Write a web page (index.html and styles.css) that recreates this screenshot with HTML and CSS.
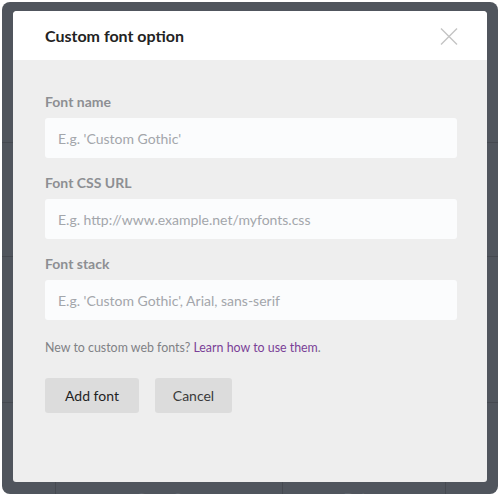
FILE: index.html
```html
<!DOCTYPE html>
<html>
<head>
<meta charset="utf-8">
<link rel="stylesheet" href="styles.css">
</head>
<body>
<div class="frame">
  <div class="backdrop">
    <div class="bd-row r1"></div>
    <div class="bd-row r2"></div>
    <div class="bd-row r3"></div>
    <div class="bd-row r4">
      <div class="bd-cell c1"></div>
      <div class="bd-cell c2">Open Sans</div>
      <div class="bd-cell c3">Delete</div>
      <div class="bd-cell c4"></div>
    </div>
  </div>
  <div class="modal">
    <div class="modal-header">
      <h1 class="title">Custom font option</h1>
      <svg class="close" width="18" height="17" viewBox="0 0 18 17">
        <path d="M1 0.5 L17 16.5 M17 0.5 L1 16.5" stroke="#c4c4c4" stroke-width="1.4" fill="none"/>
      </svg>
    </div>
    <div class="modal-body">
      <div class="field">
        <label class="label">Font name</label>
        <input class="input" type="text" placeholder="E.g. 'Custom Gothic'">
      </div>
      <div class="field">
        <label class="label">Font CSS URL</label>
        <input class="input" type="text" placeholder="E.g. http://www.example.net/myfonts.css">
      </div>
      <div class="field">
        <label class="label">Font stack</label>
        <input class="input" type="text" placeholder="E.g. 'Custom Gothic', Arial, sans-serif">
      </div>
      <p class="help">New to custom web fonts? <a class="link" href="#">Learn how to use them</a>.</p>
      <div class="actions">
        <button class="btn btn-primary">Add font</button>
        <button class="btn btn-cancel">Cancel</button>
      </div>
    </div>
  </div>
</div>
</body>
</html>
```

FILE: styles.css
```css
html, body {
  margin: 0;
  padding: 0;
  background: #ffffff;
}
body {
  font-family: Lato, "Open Sans", "Liberation Sans", sans-serif;
}
.frame {
  position: relative;
  box-sizing: border-box;
  width: 496px;
  height: 492px;
  margin: 2px 0 0 2px;
  background: #50555d;
  border-radius: 8px;
  padding: 9px 11px 12px 11px;
  overflow: hidden;
}
.backdrop {
  position: absolute;
  inset: 0;
  display: flex;
  flex-direction: column;
  overflow: hidden;
}
.bd-row {
  flex-shrink: 0;
  border-bottom: 1px solid #454950;
}
.r1 { height: 140px; }
.r2 { height: 113px; }
.r3 { height: 145px; }
.r4 {
  flex: 1 0 auto;
  border-bottom: none;
  display: flex;
  padding-top: 78px;
}
.bd-cell {
  border-left: 1px solid #454950;
  color: #5e636b;
  font-size: 14px;
  padding-top: 8px;
  text-align: center;
}
.c1 { width: 53px; border-left: none; }
.c2 { width: 226px; }
.c3 { width: 162px; }
.c4 { flex: 1; }
.modal {
  position: relative;
  width: 474px;
  height: 471px;
  background: #eeeeee;
  border-radius: 4px 4px 3px 3px;
  overflow: hidden;
  display: flex;
  flex-direction: column;
}
.modal-header {
  height: 49px;
  background: #ffffff;
  display: flex;
  align-items: center;
  justify-content: space-between;
  padding: 0 29px 0 32px;
  flex-shrink: 0;
}
.title {
  margin: 0;
  font-size: 16px;
  font-weight: 700;
  color: #232323;
}
.close {
  display: block;
  margin-top: 1px;
}
.modal-body {
  padding: 32px 30px 0 32px;
  display: flex;
  flex-direction: column;
}
.field {
  display: flex;
  flex-direction: column;
  margin-bottom: 15px;
}
.label {
  font-size: 14px;
  font-weight: 700;
  color: #8d8f93;
  line-height: 20px;
  margin-bottom: 6px;
}
.input {
  box-sizing: border-box;
  width: 412px;
  height: 40px;
  border: none;
  border-radius: 3px;
  background: #fbfcfd;
  padding: 0 13px;
  font-family: Lato, "Open Sans", "Liberation Sans", sans-serif;
  font-size: 14px;
  color: #333;
  outline: none;
}
.input::placeholder {
  color: #a3a6ab;
}
.help {
  margin: 4px 0 0 0;
  font-size: 12.4px;
  line-height: 18px;
  color: #7f8185;
}
.link {
  color: #7a3f97;
  text-decoration: none;
}
.actions {
  display: flex;
  gap: 16px;
  margin-top: 21px;
}
.btn {
  height: 35px;
  border: none;
  border-radius: 3px;
  background: #dcdcdc;
  font-family: Lato, "Open Sans", "Liberation Sans", sans-serif;
  font-size: 14px;
  padding: 0;
}
.btn-primary {
  width: 94px;
  color: #1f1f1f;
}
.btn-cancel {
  width: 77px;
  color: #3a3a3a;
}
```
